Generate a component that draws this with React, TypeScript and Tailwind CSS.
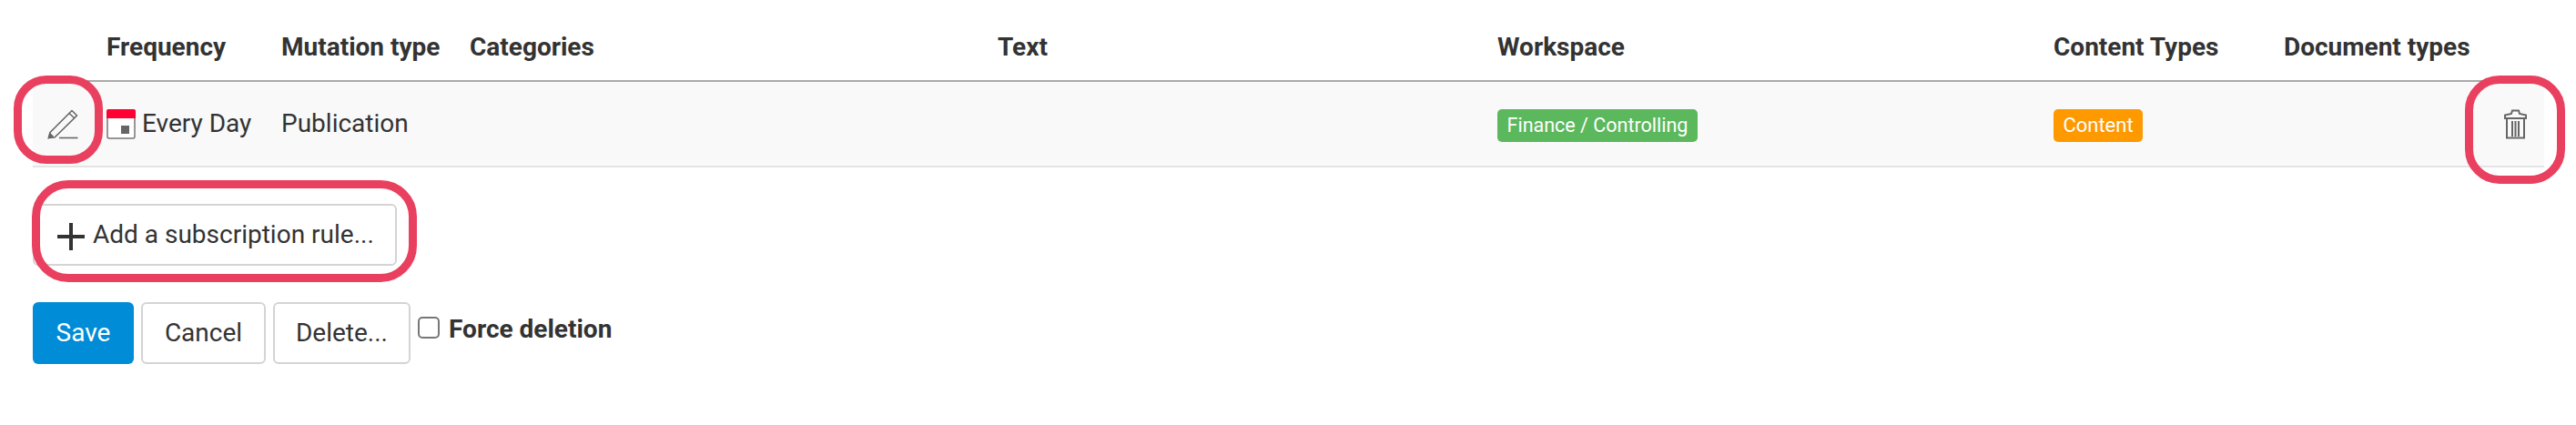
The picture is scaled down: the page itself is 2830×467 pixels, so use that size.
const columns = [
  { label: "", width: "w-[73px]" },
  { label: "Frequency", width: "w-[192px]" },
  { label: "Mutation type", width: "w-[207px]" },
  { label: "Categories", width: "w-[580px]" },
  { label: "Text", width: "w-[549px]" },
  { label: "Workspace", width: "w-[611px]" },
  { label: "Content Types", width: "w-[253px]" },
  { label: "Document types", width: "w-[219px]" },
  { label: "", width: "w-[75px]" },
];

function PencilIcon() {
  return (
    <svg width="34" height="33" viewBox="0 0 34 33" fill="none" stroke="#666" strokeWidth="1.6">
      <path d="M1.5 31.5 L3 25.5 L27 1.5 L32.5 7 L8 31 Z" strokeLinejoin="round" />
      <path d="M24 4.5 L30 10" />
      <path d="M1.5 31.5 L6 30 L3 27 Z" fill="#666" />
      <path d="M13 31.5 H33.5" />
    </svg>
  );
}

function CalendarIcon() {
  return (
    <svg width="32" height="33" viewBox="0 0 32 33" className="shrink-0">
      <rect x="1" y="1" width="30" height="31" rx="2" fill="#fff" stroke="#777" strokeWidth="1.5" />
      <path d="M0 2 a2 2 0 0 1 2 -2 H30 a2 2 0 0 1 2 2 V10 H0 Z" fill="#ff0033" />
      <rect x="16" y="18" width="9" height="9" fill="#666" />
    </svg>
  );
}

function TrashIcon() {
  return (
    <svg width="25" height="33" viewBox="0 0 25 33" fill="none" stroke="#666" strokeWidth="2">
      <path d="M1 10 V6.5 L8 5 L9 1.5 H16 L17 5 L24 6.5 V10 Z" />
      <path d="M3 10 V31.5 H22 V10" />
      <path d="M9 13 V30 M12.5 13 V30 M16 13 V30" />
    </svg>
  );
}

function Marker({ className }: { className: string }) {
  return <div className={`absolute border-[9px] border-[#ea405f] ${className}`} />;
}

export default function App() {
  return (
    <div className="relative h-[467px] w-[2830px] overflow-hidden bg-white pl-9 text-[28px] leading-[40px] text-[#333]" style={{ fontFamily: "Roboto, sans-serif" }}>
      <table className="w-[2759px] table-fixed">
        <colgroup>
          {columns.map((col, index) => (
            <col key={index} className={col.width} />
          ))}
        </colgroup>
        <thead>
          <tr>
            {columns.map((col, index) => (
              <th key={index} className="h-[89px] border-b-2 border-[#aaaaaa] pb-4 pl-2 text-left align-bottom font-bold whitespace-nowrap">
                {col.label}
              </th>
            ))}
          </tr>
        </thead>
        <tbody>
          <tr className="h-[94px] border-b-2 border-[#e4e4e4] bg-[#f9f9f9]">
            <td className="pl-4 align-middle">
              <PencilIcon />
            </td>
            <td className="pl-2 align-middle">
              <div className="flex items-center gap-2">
                <CalendarIcon />
                <span className="-ml-px whitespace-nowrap">Every Day</span>
              </div>
            </td>
            <td className="pl-2 align-middle">Publication</td>
            <td />
            <td />
            <td className="pl-2 align-middle">
              <span className="inline-flex h-9 w-[220px] items-center justify-center rounded-[5px] bg-[#5cb85c] text-[21.5px] whitespace-nowrap text-white">
                Finance / Controlling
              </span>
            </td>
            <td className="pl-2 align-middle">
              <span className="inline-flex h-9 w-[98px] items-center justify-center rounded-[5px] bg-[#ff9900] text-[22px] text-white">
                Content
              </span>
            </td>
            <td />
            <td className="pl-[31px] align-middle">
              <TrashIcon />
            </td>
          </tr>
        </tbody>
      </table>

      <button className="mt-10 flex h-[68px] w-[400px] items-center rounded-[6px] border-2 border-[#d4d4d4] bg-white pl-6 whitespace-nowrap">
        <svg width="30" height="30" viewBox="0 0 30 30" className="mr-[9px] mt-1 ml-px shrink-0" stroke="#333" strokeWidth="4">
          <path d="M0 15 H30 M15 0 V30" />
        </svg>
        Add a subscription rule...
      </button>

      <div className="mt-10 flex items-start">
        <button className="h-[68px] w-[111px] rounded-[6px] bg-[#008cd6] text-white">Save</button>
        <button className="ml-2 h-[68px] w-[137px] rounded-[6px] border-2 border-[#d4d4d4] bg-white">Cancel</button>
        <button className="ml-2 h-[68px] w-[151px] rounded-[6px] border-2 border-[#d4d4d4] bg-white">Delete...</button>
        <div className="ml-2 mt-4 h-6 w-6 rounded-[5px] border-2 border-[#777] bg-white" />
        <span className="ml-2.5 mt-2.5 font-bold whitespace-nowrap">Force deletion</span>
      </div>

      <Marker className="left-[15px] top-[83px] h-[97px] w-[98px] rounded-[36px]" />
      <Marker className="left-[2708px] top-[83px] h-[119px] w-[110px] rounded-[38px]" />
      <Marker className="left-[35px] top-[198px] h-[112px] w-[423px] rounded-[40px]" />
    </div>
  );
}
